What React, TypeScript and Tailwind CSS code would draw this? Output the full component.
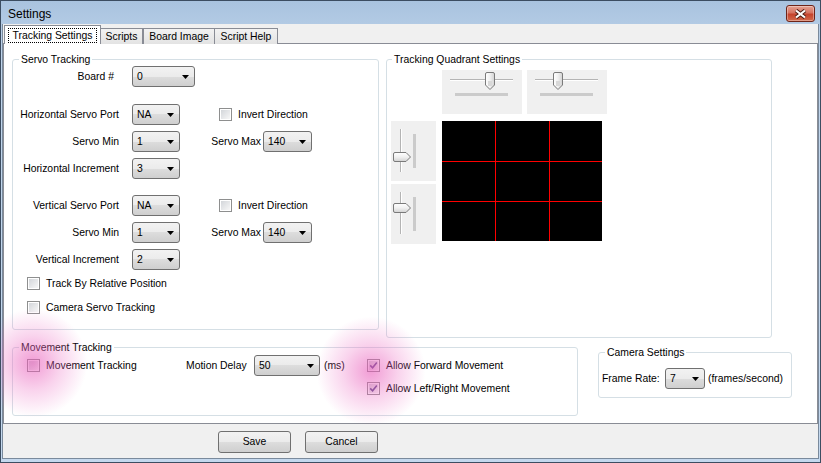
import type { ReactNode } from 'react';

function Combo({ value, className }: { value: string; className: string }) {
  return (
    <div
      className={`${className} h-[21px] flex items-center justify-between rounded-[3px] border border-[#707070] bg-[linear-gradient(#f2f2f2,#ebebeb_50%,#dddddd_50%,#cfcfcf)] pl-[4px] pr-[5px]`}
    >
      <span>{value}</span>
      <svg width="7" height="4" viewBox="0 0 7 4">
        <path d="M0 0h7L3.5 4z" fill="#000" />
      </svg>
    </div>
  );
}

function Check({ checked }: { checked?: boolean }) {
  return (
    <span className="flex w-[13px] h-[13px] shrink-0 border border-[#8e8f8f] bg-white p-[1px]">
      <span className="flex flex-1 items-center justify-center bg-[linear-gradient(135deg,#d3d6da,#f7f7f7)]">
        {checked && (
          <svg width="9" height="9" viewBox="0 0 9 9">
            <path d="M1.2 4.4 L3.6 6.8 L7.8 1.6" fill="none" stroke="#5a4a8a" strokeWidth="1.6" />
          </svg>
        )}
      </span>
    </span>
  );
}

function WinButton({ children }: { children: ReactNode }) {
  return (
    <button className="w-[73px] h-[22px] rounded-[3px] border border-[#707070] bg-[linear-gradient(#f2f2f2,#ebebeb_50%,#dddddd_50%,#cfcfcf)] text-center">
      {children}
    </button>
  );
}

function ThumbGrad({ id, vertical }: { id: string; vertical?: boolean }) {
  return (
    <defs>
      <linearGradient id={id} x1="0" y1="0" x2={vertical ? '0' : '1'} y2={vertical ? '1' : '0'}>
        <stop offset="0" stopColor="#ffffff" />
        <stop offset="0.5" stopColor="#f0f0f0" />
        <stop offset="1" stopColor="#d2d2d2" />
      </linearGradient>
    </defs>
  );
}

function HSlider({ thumb }: { thumb: number }) {
  return (
    <div className="w-[80px] h-[44px] bg-[#f0f0f0]">
      <svg width="80" height="44" viewBox="0 0 80 44">
        <ThumbGrad id="hthumb" />
        <line x1="8" y1="9.5" x2="71" y2="9.5" stroke="#b4b4b4" />
        <line x1="8" y1="10.5" x2="71" y2="10.5" stroke="#ffffff" />
        <rect x="13" y="23" width="53" height="3" fill="#cbcbcb" />
        <g transform={`translate(${thumb},2)`}>
          <path
            d="M0.5 2 Q0.5 0.5 2 0.5 H8 Q9.5 0.5 9.5 2 V13 L5 17.5 L0.5 13 Z"
            fill="url(#hthumb)"
            stroke="#7a7a7a"
          />
          <rect x="3" y="9" width="4" height="5" fill="#d8d8d8" />
        </g>
      </svg>
    </div>
  );
}

function VSlider({ track, thumb, bar }: { track: [number, number]; thumb: number; bar: [number, number] }) {
  return (
    <div className="w-[45px] h-[60px] bg-[#f0f0f0]">
      <svg width="45" height="60" viewBox="0 0 45 60">
        <ThumbGrad id="vthumb" vertical />
        <line x1="9.5" y1={track[0]} x2="9.5" y2={track[1]} stroke="#b4b4b4" />
        <line x1="10.5" y1={track[0]} x2="10.5" y2={track[1]} stroke="#ffffff" />
        <rect x="22" y={bar[0]} width="3" height={bar[1] - bar[0]} fill="#cbcbcb" />
        <g transform={`translate(2,${thumb})`}>
          <path
            d="M2 0.5 H13 L17.5 5 L13 9.5 H2 Q0.5 9.5 0.5 8 V2 Q0.5 0.5 2 0.5 Z"
            fill="url(#vthumb)"
            stroke="#7a7a7a"
          />
        </g>
      </svg>
    </div>
  );
}

function GroupBox({
  title,
  className,
  legendClass,
  children,
}: {
  title: string;
  className: string;
  legendClass: string;
  children: ReactNode;
}) {
  return (
    <fieldset className={`${className} border border-[#d5dfe5] rounded-[3px]`}>
      <legend className={`${legendClass} px-[2px] h-[13px] leading-[13px]`}>{title}</legend>
      {children}
    </fieldset>
  );
}

export default function App() {
  return (
    <div className="relative w-[821px] h-[463px] overflow-hidden flex flex-col border border-[#3c4d61] bg-[linear-gradient(#a9c3df,#bfd4eb_12%,#c4d8ee)] font-['Liberation_Sans',Arial,sans-serif] text-[10.4px] text-black">
      {/* title bar */}
      <div className="h-[23px] shrink-0 flex justify-between pl-[7px] pr-[5px]">
        <span className="mt-[6px] text-[12px] leading-[14px]">Settings</span>
        <div className="mt-[4px] w-[29px] h-[17px] rounded-[3px] border border-[#6e2418] bg-[linear-gradient(#e5a292,#d67361_45%,#c5432c_55%,#d36a4c)] flex items-center justify-center shadow-[inset_0_0_0_1px_rgba(255,255,255,0.35)]">
          <svg width="13" height="10" viewBox="0 0 13 10">
            <path d="M2 1.5 L11 8.5 M11 1.5 L2 8.5" stroke="#4b1a12" strokeWidth="4" />
            <path d="M2 1.5 L11 8.5 M11 1.5 L2 8.5" stroke="#ffffff" strokeWidth="2.2" />
          </svg>
        </div>
      </div>

      {/* client area */}
      <div className="flex-1 mx-[1px] mb-[3px] flex flex-col border-x border-b border-[#7a8a9c] bg-[#f0f0f0]">
        {/* tabs */}
        <div className="relative z-10 flex items-end h-[19px] mt-[1px] pl-[1px] -mb-[1px]">
          <div className="w-[97px] h-[19px] flex items-start justify-center border-x border-t border-[#898c95] bg-white pt-[2px]">
            <span className="w-[89px] h-[15px] flex items-center justify-center border border-dotted border-black">
              Tracking Settings
            </span>
          </div>
          <div className="w-[42px] h-[16px] flex items-center justify-center border-r border-t border-[#898c95] bg-[linear-gradient(#f2f2f2,#e3e3e3)]">
            Scripts
          </div>
          <div className="w-[72px] h-[16px] flex items-center justify-center border-x border-t border-[#898c95] bg-[linear-gradient(#f2f2f2,#e3e3e3)]">
            Board Image
          </div>
          <div className="w-[63px] h-[16px] flex items-center justify-center border-r border-t border-[#898c95] bg-[linear-gradient(#f2f2f2,#e3e3e3)]">
            Script Help
          </div>
        </div>

        {/* tab page */}
        <div className="h-[381px] border border-[#898c95] bg-white pl-[8px] pt-[9px]">
          <div className="flex items-start">
            <GroupBox title="Servo Tracking" className="w-[367px] pb-[15px]" legendClass="ml-[6px]">
              <div className="flex items-center h-[21px]">
                <span className="w-[101px] text-right">Board #</span>
                <Combo value="0" className="ml-[18px] w-[63px]" />
              </div>
              <div className="flex items-center h-[21px] mt-[17px]">
                <span className="w-[106px] text-right">Horizontal Servo Port</span>
                <Combo value="NA" className="ml-[13px] w-[48px]" />
                <span className="ml-[39px]">
                  <Check />
                </span>
                <span className="ml-[6px]">Invert Direction</span>
              </div>
              <div className="flex items-center h-[21px] mt-[6px]">
                <span className="w-[106px] text-right">Servo Min</span>
                <Combo value="1" className="ml-[13px] w-[48px]" />
                <span className="w-[81px] text-right">Servo Max</span>
                <Combo value="140" className="ml-[2px] w-[49px]" />
              </div>
              <div className="flex items-center h-[21px] mt-[6px]">
                <span className="w-[106px] text-right">Horizontal Increment</span>
                <Combo value="3" className="ml-[13px] w-[48px]" />
              </div>
              <div className="flex items-center h-[21px] mt-[16px]">
                <span className="w-[106px] text-right">Vertical Servo Port</span>
                <Combo value="NA" className="ml-[13px] w-[48px]" />
                <span className="ml-[39px]">
                  <Check />
                </span>
                <span className="ml-[6px]">Invert Direction</span>
              </div>
              <div className="flex items-center h-[21px] mt-[6px]">
                <span className="w-[106px] text-right">Servo Min</span>
                <Combo value="1" className="ml-[13px] w-[48px]" />
                <span className="w-[81px] text-right">Servo Max</span>
                <Combo value="140" className="ml-[2px] w-[49px]" />
              </div>
              <div className="flex items-center h-[21px] mt-[6px]">
                <span className="w-[106px] text-right">Vertical Increment</span>
                <Combo value="2" className="ml-[13px] w-[48px]" />
              </div>
              <div className="flex items-center h-[13px] mt-[7px] pl-[14px]">
                <Check />
                <span className="ml-[6px]">Track By Relative Position</span>
              </div>
              <div className="flex items-center h-[13px] mt-[11px] pl-[14px]">
                <Check />
                <span className="ml-[6px]">Camera Servo Tracking</span>
              </div>
            </GroupBox>

            <GroupBox
              title="Tracking Quadrant Settings"
              className="ml-[7px] w-[386px] h-[285px]"
              legendClass="ml-[5px]"
            >
              <div className="flex gap-[5px] mt-[4px] pl-[55px]">
                <HSlider thumb={43} />
                <HSlider thumb={26} />
              </div>
              <div className="flex items-start mt-[7px] pl-[4px]">
                <div className="flex flex-col gap-[3px]">
                  <VSlider track={[8, 51]} thumb={31} bar={[13, 47]} />
                  <VSlider track={[8, 50]} thumb={19} bar={[13, 47]} />
                </div>
                {/* quadrant preview: black cells split by red lines */}
                <div className="ml-[6px] w-[160px] h-[120px] grid grid-cols-[53px_53px_52px] grid-rows-[40px_39px_39px] gap-px bg-[#ff0000]">
                  {Array.from({ length: 9 }).map((_, i) => (
                    <div key={i} className="bg-black" />
                  ))}
                </div>
              </div>
            </GroupBox>
          </div>

          <div className="flex items-start mt-[3px]">
            <GroupBox title="Movement Tracking" className="w-[566px] h-[75px]" legendClass="ml-[6px]">
              <div className="flex items-start mt-[1px]">
                <div className="w-[173px] h-[21px] flex items-center pl-[14px]">
                  <Check />
                  <span className="ml-[6px]">Movement Tracking</span>
                </div>
                <div className="w-[68px] h-[21px] flex items-center">Motion Delay</div>
                <Combo value="50" className="w-[66px]" />
                <div className="w-[47px] h-[21px] flex items-center pl-[4px]">(ms)</div>
                <div className="flex flex-col gap-[2px]">
                  <div className="h-[21px] flex items-center">
                    <Check checked />
                    <span className="ml-[6px]">Allow Forward Movement</span>
                  </div>
                  <div className="h-[21px] flex items-center">
                    <Check checked />
                    <span className="ml-[6px]">Allow Left/Right Movement</span>
                  </div>
                </div>
              </div>
            </GroupBox>

            <GroupBox title="Camera Settings" className="ml-[20px] mt-[5px] w-[194px] h-[52px]" legendClass="ml-[6px]">
              <div className="flex items-center h-[21px] mt-[9px]">
                <span className="w-[66px] pl-[3px]">Frame Rate:</span>
                <Combo value="7" className="w-[40px]" />
                <span className="ml-[3px]">(frames/second)</span>
              </div>
            </GroupBox>
          </div>
        </div>

        {/* buttons */}
        <div className="flex gap-[14px] mt-[7px] pl-[215px]">
          <WinButton>Save</WinButton>
          <WinButton>Cancel</WinButton>
        </div>
      </div>

      {/* cursor highlight glows */}
      <div className="pointer-events-none absolute left-[-23px] top-[307px] w-[110px] h-[110px] rounded-full bg-[radial-gradient(circle,rgba(232,90,185,0.6)_0%,rgba(236,110,195,0.3)_35%,rgba(240,140,210,0)_70%)]" />
      <div className="pointer-events-none absolute left-[315px] top-[315px] w-[110px] h-[110px] rounded-full bg-[radial-gradient(circle,rgba(232,90,185,0.6)_0%,rgba(236,110,195,0.3)_35%,rgba(240,140,210,0)_70%)]" />
    </div>
  );
}
